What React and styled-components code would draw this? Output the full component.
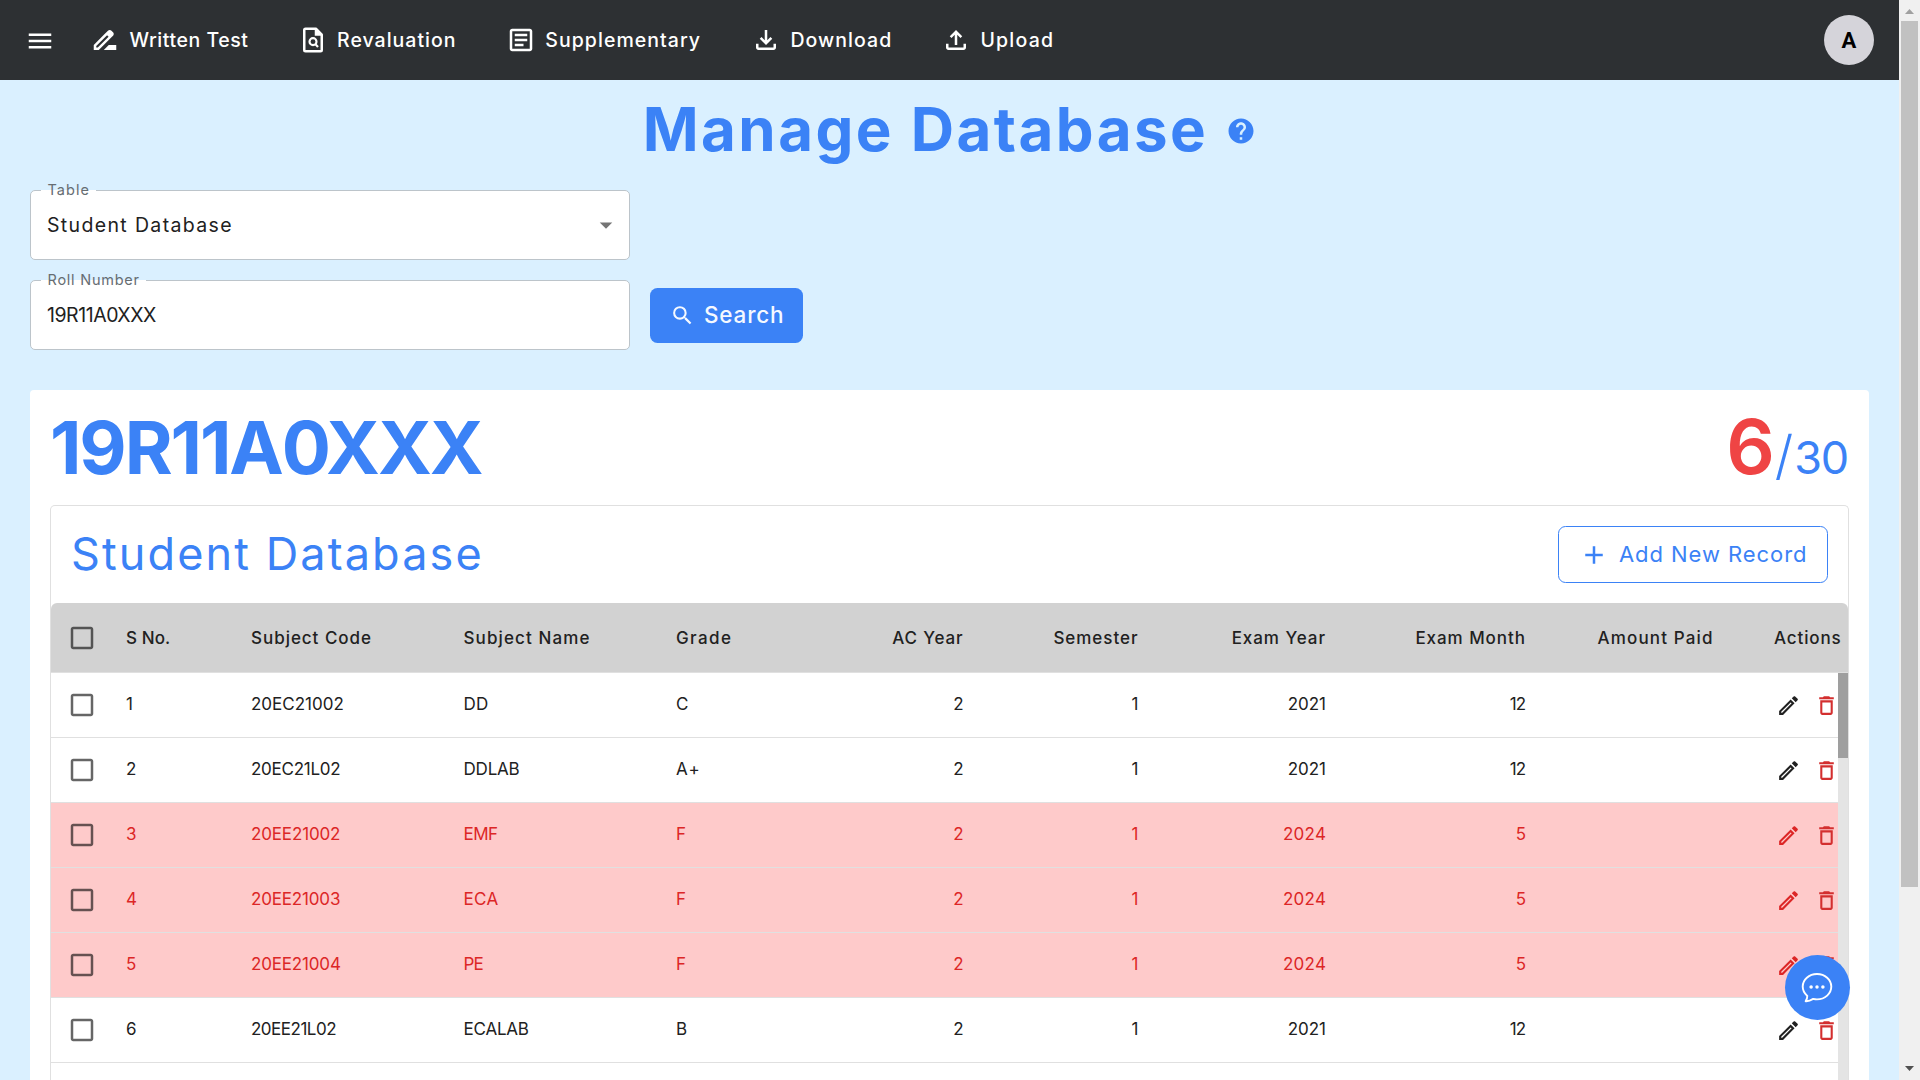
import React from "react";
import styled, { createGlobalStyle } from "styled-components";
import {
  MdMenu,
  MdDriveFileRenameOutline,
  MdOutlineArticle,
  MdOutlineFileDownload,
  MdOutlineFileUpload,
  MdHelp,
  MdArrowDropDown,
  MdSearch,
  MdAdd,
  MdCheckBoxOutlineBlank,
  MdOutlineEdit,
  MdDeleteOutline,
} from "react-icons/md";

const blue = "#3b82f6";
const red = "#dc2626";
const ink = "#212121";

const GlobalStyle = createGlobalStyle`
  *, *::before, *::after { box-sizing: border-box; }
  body {
    margin: 0;
    overflow: hidden;
    font-family: Inter, "Liberation Sans", sans-serif;
    color: ${ink};
  }
  svg { display: block; flex: none; }
`;

const Page = styled.div`
  position: relative;
  display: flex;
  width: 1920px;
  height: 1080px;
  overflow: hidden;
  background: #daf0ff;
`;

const Content = styled.div`
  display: flex;
  flex-direction: column;
  width: 1899px;
  height: 1080px;
  overflow: hidden;
`;

const Text = styled.span`
  letter-spacing: ${(p) => p.$track || 0}px;
  margin-right: ${(p) => -(p.$track || 0)}px;
  white-space: nowrap;
`;

const NavBar = styled.nav`
  flex: none;
  display: flex;
  align-items: center;
  height: 80px;
  padding: 0 25px;
  background: #2d3033;
  color: #fff;
`;

const MenuButton = styled.div`
  margin: 1px 35px 0 0;
`;

const NavItem = styled.a`
  display: flex;
  align-items: center;
  gap: 9.5px;
  width: ${(p) => p.$width}px;
  font-size: 19.5px;
  font-weight: 500;
  line-height: 30px;
`;

const Avatar = styled.div`
  display: flex;
  align-items: center;
  justify-content: center;
  width: 50px;
  height: 50px;
  margin-left: auto;
  border-radius: 50%;
  background: #d5d4da;
  color: #000;
  font: 700 22px Roboto, sans-serif;
`;

const TitleRow = styled.header`
  flex: none;
  display: flex;
  align-items: center;
  justify-content: center;
  gap: 20.5px;
  height: 100px;
  margin-bottom: 10px;
  color: ${blue};

  svg {
    margin-top: 2px;
  }
`;

const Title = styled.h1`
  margin: 0;
  padding-bottom: 2px;
  font-size: 60px;
  font-weight: 700;
  line-height: 90px;
`;

const Form = styled.form`
  flex: none;
  display: flex;
  flex-direction: column;
  gap: 20px;
  padding-left: 30px;
`;

const FormRow = styled.div`
  display: flex;
  align-items: center;
  gap: 20px;
`;

const Field = styled.div`
  position: relative;
  display: flex;
  align-items: center;
  justify-content: space-between;
  width: 600px;
  height: 70px;
  padding: 0 8px 0 16px;
  border: 1px solid #bcc4ca;
  border-radius: 5px;
  background: #fff;
  font-size: 19.5px;
`;

const FieldLabel = styled.label`
  position: absolute;
  left: 10px;
  top: -11px;
  width: ${(p) => p.$width}px;
  height: 20px;
  padding-left: 6.5px;
  background: linear-gradient(transparent 10px, #fff 10px);
  color: #666d72;
  font-size: 14.5px;
  line-height: 20px;
`;

const SearchButton = styled.div`
  display: flex;
  align-items: center;
  gap: 9px;
  width: 153px;
  height: 55px;
  padding-left: 20px;
  border-radius: 7.5px;
  background: ${blue};
  color: #f5f9ff;
  font-size: 22.5px;
  font-weight: 500;

  span {
    padding-bottom: 2px;
  }
`;

const Card = styled.section`
  flex: none;
  display: flex;
  flex-direction: column;
  width: 1839px;
  height: 740px;
  margin: 40px 0 0 30px;
  padding: 20px 20px 0;
  border-radius: 4px 4px 0 0;
  background: #fff;
`;

const CardHead = styled.div`
  display: flex;
  justify-content: space-between;
  align-items: baseline;
  height: 75px;
  margin-bottom: 20px;
  color: ${blue};
  line-height: 73px;
`;

const RollNumber = styled.h2`
  margin: 0;
  font-size: 73px;
  font-weight: 700;
`;

const Score = styled.div`
  display: flex;
  align-items: baseline;
  margin-right: 1px;
`;

const Failed = styled.span`
  color: #ef4444;
  font-size: 76px;
  font-weight: 600;
`;

const Slash = styled.span`
  margin-right: 1px;
  font-size: 53px;
  font-weight: 300;
`;

const Total = styled.span`
  font-size: 45px;
  letter-spacing: -1.2px;
`;

const TablePanel = styled.div`
  flex: 1;
  display: flex;
  flex-direction: column;
  border: 1px solid #e0e0e0;
  border-bottom: 0;
  border-radius: 5px 5px 0 0;
`;

const PanelHead = styled.div`
  display: flex;
  align-items: center;
  justify-content: space-between;
  height: 97px;
  padding: 0 20px;
  color: ${blue};
`;

const PanelTitle = styled.h3`
  margin: 0;
  padding-bottom: 2px;
  font-size: 45px;
  font-weight: 400;
  line-height: 60px;
`;

const AddButton = styled.div`
  display: flex;
  align-items: center;
  gap: 10px;
  width: 270px;
  height: 57px;
  padding-left: 20px;
  border: 1px solid ${blue};
  border-radius: 7.5px;
  font-size: 22px;

  span {
    padding-bottom: 2px;
  }
`;

const columns =
  "75px 125px 212.5px 212.5px 137.5px 150px 175px 187.5px 200px 187.5px 1fr";

const HeadRow = styled.div`
  display: grid;
  grid-template-columns: ${columns};
  align-items: center;
  height: 70px;
  border-bottom: 1px solid #e0e0e0;
  border-radius: 6px 6px 0 0;
  background: #d2d2d2;
  font-size: 17px;
  font-weight: 500;
  line-height: 24px;
`;

const Body = styled.div`
  flex: 1;
  display: flex;
`;

const Rows = styled.div`
  flex: 1;
  min-width: 0;
`;

const Row = styled.div`
  display: grid;
  grid-template-columns: ${columns};
  align-items: center;
  height: 65px;
  border-bottom: 1px solid #e0e0e0;
  background: ${(p) => (p.$failed ? "#fecaca" : "#fff")};
  color: ${(p) => (p.$failed ? red : ink)};
  font-size: 17px;
  line-height: 24px;
`;

const Cell = styled.div`
  display: flex;
  justify-content: ${(p) => (p.$right ? "flex-end" : "flex-start")};
  padding-right: ${(p) => (p.$head ? 1 : 0)}px;
  padding-bottom: ${(p) => (p.$head ? 0 : 3)}px;
`;

const CheckCell = styled.div`
  padding-left: 16px;
  color: rgba(0, 0, 0, 0.6);
`;

const ActionsHead = styled.div`
  padding-left: 60.5px;
`;

const Actions = styled.div`
  display: flex;
  gap: 13px;
  padding: 1px 0 0 62.5px;

  svg:last-child {
    color: #d32f2f;
  }
`;

const ListTrack = styled.div`
  width: 10px;
  background: #e4e4e4;
`;

const ListThumb = styled.div`
  height: 85px;
  background: #9f9f9f;
`;

const PageTrack = styled.div`
  display: flex;
  flex-direction: column;
  align-items: center;
  width: 21px;
  height: 1080px;
  padding: 9px 1px 9px 0;
  background: #f0f0f0;
`;

const PageThumb = styled.div`
  width: 17px;
  height: 866px;
  margin: 7px 0 auto 1px;
  background: #c1c1c1;
`;

const ChatButton = styled.div`
  position: absolute;
  left: 1785px;
  top: 955px;
  display: flex;
  align-items: center;
  justify-content: center;
  width: 65px;
  height: 65px;
  padding: 0 1px 1px 0;
  border-radius: 50%;
  background: ${blue};
  color: #fff;
`;

function FindInPageIcon({ size }) {
  return (
    <svg width={size} height={size} viewBox="0 0 24 24" fill="none" stroke="currentColor">
      <path
        d="M14.3 3H6a1 1 0 0 0-1 1v16a1 1 0 0 0 1 1h12a1 1 0 0 0 1-1V7.7Z"
        strokeWidth="2"
        strokeLinejoin="round"
      />
      <path d="M13.4 2.4V8.6H19.6Z" fill="currentColor" stroke="none" />
      <circle cx="12" cy="13.3" r="2.8" strokeWidth="1.7" />
      <path d="M13.8 15.2L16 17.6" strokeWidth="1.7" />
    </svg>
  );
}

function ChatIcon({ size }) {
  return (
    <svg width={size} height={size} viewBox="0 0 32 32" fill="none" stroke="currentColor">
      <path
        d="M16 3C24 3 30.3 8.6 30.3 15.6S24 28.4 16 28.4C14.8 28.4 13.4 28.2 12.2 27.9C10 29.3 7 30.4 4.6 30.2C5.8 28.5 6.4 27 6.3 24.9C3.3 22.4 1.7 19.2 1.7 15.6C1.7 8.6 8 3 16 3Z"
        strokeWidth="1.9"
        strokeLinejoin="round"
      />
      <g fill="currentColor" stroke="none">
        <circle cx="10.1" cy="15.9" r="1.75" />
        <circle cx="16" cy="15.9" r="1.75" />
        <circle cx="21.9" cy="15.9" r="1.75" />
      </g>
    </svg>
  );
}

const nav = [
  { label: "Written Test", icon: MdDriveFileRenameOutline, width: 207.5, track: 0.55 },
  { label: "Revaluation", icon: FindInPageIcon, width: 208.3, track: 1.02 },
  { label: "Supplementary", icon: MdOutlineArticle, width: 245.2, track: 1.05 },
  { label: "Download", icon: MdOutlineFileDownload, width: 190, track: 1.05 },
  { label: "Upload", icon: MdOutlineFileUpload, width: 130, track: 1.2 },
];

const heads = [
  ["S No.", 0.1],
  ["Subject Code", 0.97],
  ["Subject Name", 1.12],
  ["Grade", 1.41],
  ["AC Year", 0.85],
  ["Semester", 0.95],
  ["Exam Year", 0.95],
  ["Exam Month", 0.95],
  ["Amount Paid", 1.15],
];

const records = [
  ["1", "20EC21002", "DD", "C", "2", "1", "2021", "12"],
  ["2", "20EC21L02", "DDLAB", "A+", "2", "1", "2021", "12"],
  ["3", "20EE21002", "EMF", "F", "2", "1", "2024", "5"],
  ["4", "20EE21003", "ECA", "F", "2", "1", "2024", "5"],
  ["5", "20EE21004", "PE", "F", "2", "1", "2024", "5"],
  ["6", "20EE21L02", "ECALAB", "B", "2", "1", "2021", "12"],
];

const tracking = {
  "20EC21L02": -0.25,
  "20EE21002": -0.15,
  "20EE21003": -0.17,
  "20EE21004": -0.17,
  "20EE21L02": -0.5,
  DD: 0.3,
  DDLAB: -0.2,
  EMF: -0.5,
  ECA: 0.35,
  ECALAB: -0.2,
  PE: -0.8,
  "A+": 1.3,
  2024: 0.3,
  12: -0.9,
};

export default function App() {
  return (
    <>
      <GlobalStyle />
      <Page>
        <Content>
          <NavBar>
            <MenuButton>
              <MdMenu size={30} />
            </MenuButton>
            {nav.map(({ label, icon: Icon, width, track }) => (
              <NavItem key={label} $width={width}>
                <Icon size={30} />
                <Text $track={track}>{label}</Text>
              </NavItem>
            ))}
            <Avatar>A</Avatar>
          </NavBar>

          <TitleRow>
            <Title>
              <Text $track={2.47}>Manage Database</Text>
            </Title>
            <MdHelp size={30} />
          </TitleRow>

          <Form>
            <FormRow>
              <Field>
                <FieldLabel $width={55}>
                  <Text $track={1.04}>Table</Text>
                </FieldLabel>
                <Text $track={1.35}>Student Database</Text>
                <MdArrowDropDown size={30} color="#757575" />
              </Field>
            </FormRow>
            <FormRow>
              <Field>
                <FieldLabel $width={105}>
                  <Text $track={0.76}>Roll Number</Text>
                </FieldLabel>
                <Text $track={-0.45}>19R11A0XXX</Text>
              </Field>
              <SearchButton>
                <MdSearch size={25} />
                <Text $track={0.8}>Search</Text>
              </SearchButton>
            </FormRow>
          </Form>

          <Card>
            <CardHead>
              <RollNumber>
                <Text $track={-2.1}>19R11A0XXX</Text>
              </RollNumber>
              <Score>
                <Failed>6</Failed>
                <Slash>/</Slash>
                <Total>30</Total>
              </Score>
            </CardHead>
            <TablePanel>
              <PanelHead>
                <PanelTitle>
                  <Text $track={2.1}>Student Database</Text>
                </PanelTitle>
                <AddButton>
                  <MdAdd size={30} />
                  <Text $track={0.94}>Add New Record</Text>
                </AddButton>
              </PanelHead>
              <HeadRow>
                <CheckCell>
                  <MdCheckBoxOutlineBlank size={30} />
                </CheckCell>
                {heads.map(([label, track], i) => (
                  <Cell key={label} $head $right={i > 3}>
                    <Text $track={track}>{label}</Text>
                  </Cell>
                ))}
                <ActionsHead>
                  <Text $track={0.87}>Actions</Text>
                </ActionsHead>
              </HeadRow>
              <Body>
                <Rows>
                  {records.map((record) => (
                    <Row key={record[0]} $failed={record[3] === "F"}>
                      <CheckCell>
                        <MdCheckBoxOutlineBlank size={30} />
                      </CheckCell>
                      {record.map((value, i) => (
                        <Cell key={i} $right={i > 3}>
                          <Text $track={tracking[value]}>{value}</Text>
                        </Cell>
                      ))}
                      <Cell />
                      <Actions>
                        <MdOutlineEdit size={25} />
                        <MdDeleteOutline size={25} />
                      </Actions>
                    </Row>
                  ))}
                </Rows>
                <ListTrack>
                  <ListThumb />
                </ListTrack>
              </Body>
            </TablePanel>
          </Card>
        </Content>

        <PageTrack>
          <svg width="9" height="5" viewBox="0 0 9 5">
            <path d="M0 5L4.5 0L9 5Z" fill="#a0a0a0" />
          </svg>
          <PageThumb />
          <svg width="9" height="5" viewBox="0 0 9 5">
            <path d="M0 0L4.5 5L9 0Z" fill="#505050" />
          </svg>
        </PageTrack>

        <ChatButton>
          <ChatIcon size={32} />
        </ChatButton>
      </Page>
    </>
  );
}
